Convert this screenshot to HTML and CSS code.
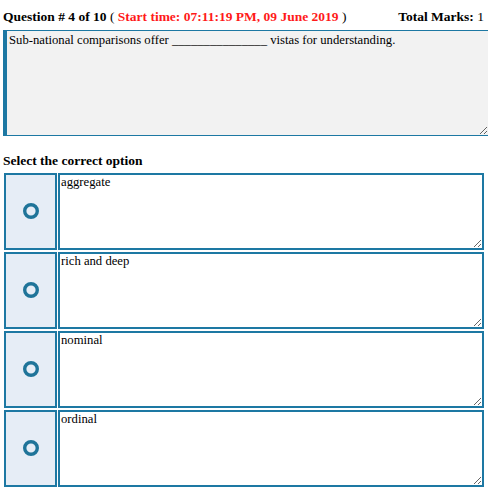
FILE: index.html
```html
<!DOCTYPE html>
<html>
<head>
<meta charset="utf-8">
<link rel="stylesheet" href="styles.css">
</head>
<body>
<div class="header">
  <div class="qtitle"><b>Question # 4 of 10</b> ( <span class="start">Start time: 07:11:19 PM, 09 June 2019</span> )</div>
  <div class="marks"><b>Total Marks:</b> 1</div>
</div>
<textarea class="question" readonly>Sub-national comparisons offer _______________ vistas for understanding.</textarea>
<div class="select">Select the correct option</div>
<div class="options">
  <div class="option">
    <div class="radio"><svg width="18" height="18" viewBox="0 0 18 18"><circle cx="9" cy="9" r="6.3" fill="none" stroke="#1f7499" stroke-width="3.4"/></svg></div>
    <textarea class="answer" readonly>aggregate</textarea>
  </div>
  <div class="option">
    <div class="radio"><svg width="18" height="18" viewBox="0 0 18 18"><circle cx="9" cy="9" r="6.3" fill="none" stroke="#1f7499" stroke-width="3.4"/></svg></div>
    <textarea class="answer" readonly>rich and deep</textarea>
  </div>
  <div class="option">
    <div class="radio"><svg width="18" height="18" viewBox="0 0 18 18"><circle cx="9" cy="9" r="6.3" fill="none" stroke="#1f7499" stroke-width="3.4"/></svg></div>
    <textarea class="answer" readonly>nominal</textarea>
  </div>
  <div class="option">
    <div class="radio"><svg width="18" height="18" viewBox="0 0 18 18"><circle cx="9" cy="9" r="6.3" fill="none" stroke="#1f7499" stroke-width="3.4"/></svg></div>
    <textarea class="answer" readonly>ordinal</textarea>
  </div>
</div>
</body>
</html>
```

FILE: styles.css
```css
html, body {
  margin: 0;
  padding: 0;
  background: #ffffff;
  overflow: hidden;
}
body {
  font-family: "Liberation Serif", "Times New Roman", serif;
  color: #000;
  width: 488px;
}
.header {
  display: flex;
  justify-content: space-between;
  align-items: baseline;
  padding: 9px 4px 5px 3px;
  height: 16px;
  font-size: 13.5px;
  line-height: 16px;
}
.qtitle b, .marks b {
  font-weight: bold;
}
.start {
  color: #ff1a1a;
  font-weight: bold;
}
.question {
  display: block;
  box-sizing: border-box;
  margin: 0 0 0 3px;
  width: 486px;
  height: 106px;
  border: 1px solid #1d78a3;
  border-left: 4px solid #1d78a3;
  background: #f2f2f2;
  font-family: "Liberation Serif", "Times New Roman", serif;
  font-size: 12.7px;
  line-height: 15px;
  padding: 2px 2px;
  color: #000;
  outline: none;
}
.select {
  font-weight: bold;
  font-size: 13.5px;
  line-height: 16px;
  margin: 17px 0 4px 3px;
}
.options {
  display: flex;
  flex-direction: column;
  gap: 2px;
  margin-left: 4px;
}
.option {
  display: grid;
  grid-template-columns: 53px 426px;
  column-gap: 1px;
  height: 77px;
}
.radio {
  box-sizing: border-box;
  border: 2px solid #1d78a3;
  background: #e6edf6;
  display: flex;
  align-items: center;
  justify-content: center;
  padding-bottom: 2px;
}
.radio svg {
  display: block;
}
.answer {
  display: block;
  box-sizing: border-box;
  width: 426px;
  height: 77px;
  border: 2px solid #1d78a3;
  background: #fff;
  font-family: "Liberation Serif", "Times New Roman", serif;
  font-size: 12.7px;
  line-height: 15px;
  padding: 0 1px;
  margin: 0;
  color: #000;
  outline: none;
}
```
